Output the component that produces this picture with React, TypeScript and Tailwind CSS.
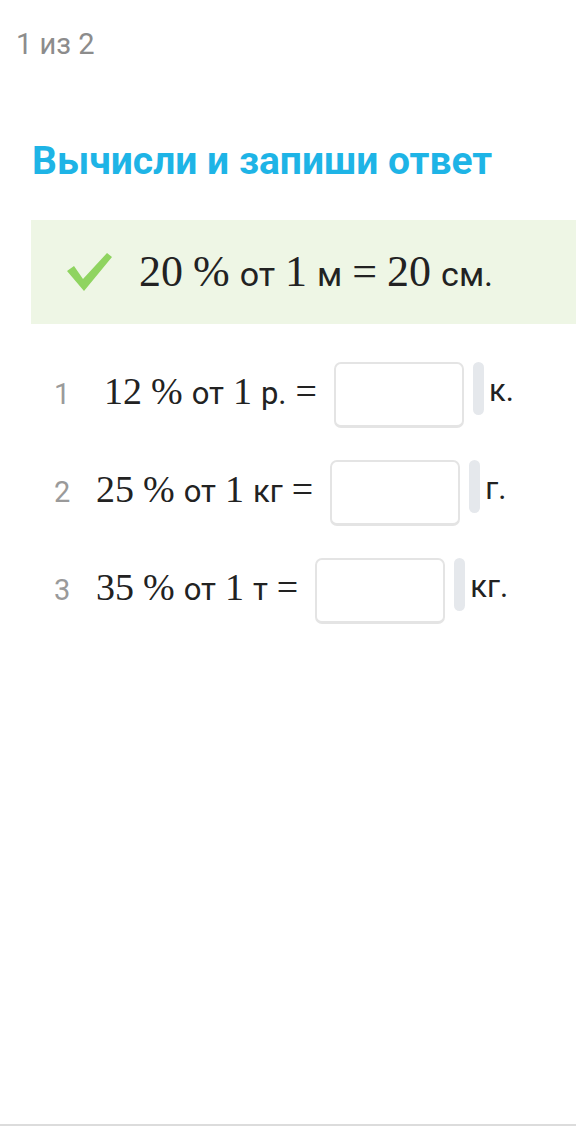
const rows = [
  { n: "1", pct: "12", unit: "р.", ans: "к.", shift: "ml-[8px]" },
  { n: "2", pct: "25", unit: "кг", ans: "г.", shift: "ml-0" },
  { n: "3", pct: "35", unit: "т", ans: "кг.", shift: "ml-0" },
];

const serif = "font-['Liberation_Serif',serif]";

function CheckMark() {
  return (
    <svg width="46" height="42" viewBox="0 0 46 42" className="shrink-0">
      <path d="M0 20 L7 15 L16 28 L40 2 L45 6 L17 40 Z" fill="#8fd460" />
    </svg>
  );
}

function AnswerRow({ n, pct, unit, ans, shift }: (typeof rows)[number]) {
  return (
    <div className="flex items-center h-[66px]">
      <span className="flex items-baseline pb-[8px] text-[#222] whitespace-nowrap">
        <span className="w-[42px] text-[29px] text-[#9a9a9a]">{n}</span>
        <span className={`${serif} text-[38px] ${shift}`}>{pct}</span>
        <span className={`${serif} text-[38px] ml-[9px]`}>%</span>
        <span className="text-[31px] ml-[9px]">от</span>
        <span className={`${serif} text-[38px] ml-[9px]`}>1</span>
        <span className="text-[31px] ml-[9px]">{unit}</span>
        <span className={`${serif} text-[38px] ml-[9px]`}>=</span>
      </span>
      <div className="flex items-start self-stretch ml-[17px]">
        <div className="w-[130px] h-[66px] rounded-[7px] border-2 border-[#e4e4e4] border-b-[3px] bg-white" />
        <div className="w-[11px] h-[53px] rounded-full bg-[#e5e8ec] ml-[9px]" />
      </div>
      <span className="text-[31px] text-[#222] ml-[5px] pb-[8px]">{ans}</span>
    </div>
  );
}

export default function App() {
  return (
    <div className="relative w-[576px] h-[1146px] bg-white font-['Roboto',sans-serif] overflow-hidden">
      <div className="pl-[16px] pt-[25px] text-[29px] leading-[38px] text-[#8c8c8c]">1 из 2</div>

      <h1 className="pl-[32px] mt-[75px] text-[39px] leading-[46px] font-bold text-[#1eb4e6]">
        Вычисли и запиши ответ
      </h1>

      <div className="ml-[31px] mt-[36px] h-[104px] bg-[#eef6e5] flex items-center pl-[36px]">
        <CheckMark />
        <span className="flex items-baseline ml-[26px] text-[#222] whitespace-nowrap">
          <span className={`${serif} text-[44px]`}>20</span>
          <span className={`${serif} text-[44px] ml-[10px]`}>%</span>
          <span className="text-[34px] ml-[10px]">от</span>
          <span className={`${serif} text-[44px] ml-[10px]`}>1</span>
          <span className="text-[34px] ml-[10px]">м</span>
          <span className={`${serif} text-[44px] ml-[10px]`}>=</span>
          <span className={`${serif} text-[44px] ml-[10px]`}>20</span>
          <span className="text-[34px] ml-[10px]">см.</span>
        </span>
      </div>

      <div className="flex flex-col gap-[32px] mt-[38px] pl-[54px]">
        {rows.map((r) => (
          <AnswerRow key={r.n} {...r} />
        ))}
      </div>

      <div className="absolute left-0 right-0 top-[1124px] h-[2px] bg-[#dcdcdc]" />
    </div>
  );
}
